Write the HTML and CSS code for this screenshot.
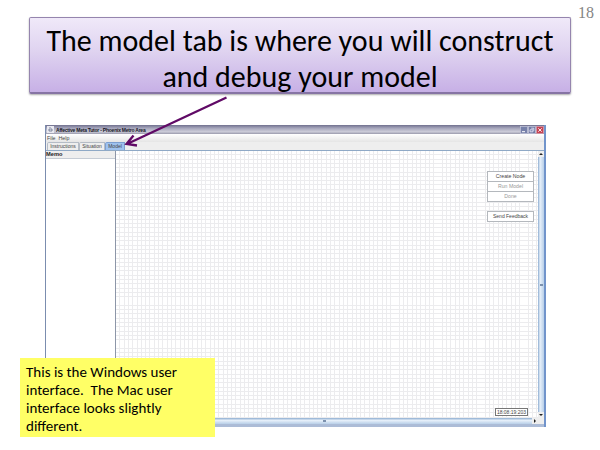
FILE: index.html
```html
<!DOCTYPE html>
<html lang="en">
<head>
<meta charset="utf-8">
<title>Model tab</title>
<link rel="stylesheet" href="styles.css">
</head>
<body>
<main class="slide">
  <div class="page-number">18</div>
  <h1 class="banner">
    <span class="line">The model tab is where you will construct</span>
    <span class="line">and debug your model</span>
  </h1>
  <section class="window">
    <header class="titlebar">
      <svg class="cup" viewBox="0 0 7 7"><path d="M0 0h7v7H0z" fill="#e9e9f0"/><path d="M2 3h3v2H2zM3 1v1" fill="none" stroke="#66708c" stroke-width=".8"/></svg>
      <span class="title">Affective Meta Tutor - Phoenix Metro Area</span>
      <div class="controls">
        <svg viewBox="0 0 8 8"><rect x=".5" y=".5" width="7" height="7" fill="#7781aa" stroke="#c3c7dc" stroke-width=".7"/><path d="M2 5.7h3" stroke="#fff"/></svg>
        <svg viewBox="0 0 8 8"><rect x=".5" y=".5" width="7" height="7" fill="#747da5" stroke="#c3c7dc" stroke-width=".7"/><path d="M2 3.8h3v2H2zM3.2 2.2h2.6v2.5" fill="none" stroke="#eef" stroke-width=".8"/></svg>
        <svg viewBox="0 0 8 8"><rect x=".5" y=".5" width="7" height="7" fill="#c74353" stroke="#d6a0b0" stroke-width=".7"/><path d="M2.3 2.3l3.4 3.4M5.7 2.3L2.3 5.7" stroke="#fff" stroke-width=".9"/></svg>
      </div>
    </header>
    <nav class="menu"><span>File</span><span>Help</span></nav>
    <nav class="tabs"><span class="tab tab-a">Instructions</span><span class="tab tab-b">Situation</span><span class="tab tab-c active">Model</span></nav>
    <div class="work">
      <aside class="memo"><div class="memo-head">Memo</div></aside>
      <div class="canvas">
        <div class="buttons">
          <div class="btn">Create Node</div>
          <div class="btn off">Run Model</div>
          <div class="btn off">Done</div>
          <div class="btn feedback">Send Feedback</div>
        </div>
        <div class="clock">18:08:19:203</div>
      </div>
      <div class="vscroll"><i class="arrow up"></i><div class="thumb"><i></i></div><i class="arrow down"></i></div>
    </div>
    <div class="hscroll"><div class="thumb"><i></i></div><i class="arrow right"></i></div>
  </section>
  <p class="note">
    <span class="line first">This is the Windows user</span>
    <span class="line">interface.&nbsp; The Mac user</span>
    <span class="line">interface looks slightly</span>
    <span class="line">different.</span>
  </p>
  <svg class="pointer" viewBox="0 0 600 450"><path d="M226.500 97.500L127 144M133.500 135.500L126.500 144L137 145.500" fill="none" stroke="#600a66" stroke-width="2.300"/></svg>
</main>
</body>
</html>
```
FILE: styles.css
```css
* { box-sizing: border-box; }
body { margin: 0; background: #fff; }
.slide { position: relative; width: 600px; height: 450px; overflow: hidden; font-family: Carlito, Lato, sans-serif; color: #000; }
.line { display: block; white-space: pre; }
.page-number { position: absolute; left: 578px; top: 4px; font: 16px/18px "Liberation Serif", serif; color: #858585; }
.banner { position: absolute; left: 29px; top: 17px; width: 542px; height: 77px; margin: 0; padding-top: 5px; border: 1px solid #9585ae; border-bottom: 2px solid #8674a4; border-radius: 2px; background: linear-gradient(#f0e9f9, #dfd3f0 45%, #c7b0e6); box-shadow: 0 1px 2px #0005; font-size: 30px; font-weight: 400; line-height: 36px; text-align: center; }
.window { position: absolute; left: 45px; top: 125px; width: 501px; height: 302px; display: flex; flex-direction: column; border-left: 1px solid #7b8daf; border-right: 2px solid #7194cb; font-family: "Liberation Sans", sans-serif; font-size: 5px; color: #444; background: #eee; }
.titlebar { display: flex; align-items: center; height: 9px; flex: none; background: linear-gradient(#70708e, #a5a5bb 35%, #cdcdd9 75%, #9999ac); }
.cup { width: 7px; height: 7px; margin-left: 1px; }
.title { margin-left: 2px; font-weight: 700; letter-spacing: -.23px; color: #16161f; }
.controls { display: flex; margin-left: auto; }
.controls svg { width: 8px; height: 8px; }
.menu { display: flex; gap: 3px; height: 8px; flex: none; padding-left: 1px; font-size: 5.3px; line-height: 8px; background: linear-gradient(#fff, #e5e5e5); }
.tabs { display: flex; align-items: flex-end; height: 9px; flex: none; background: #eee; border-bottom: 1px solid #8fa9c6; }
.tab { height: 8px; line-height: 7px; text-align: center; border: 1px solid #b5bcc6; border-bottom: 0; border-radius: 2px 0 0 0; }
.tab-a { width: 32px; margin-left: 1px; }
.tab-b { width: 26px; }
.tab-c { width: 20px; }
.active { background: #9fc2ee; border-color: #7c9fd0; }
.work { display: flex; flex: 1; min-height: 0; }
.memo { width: 70px; background: #fff; border-right: 1px solid #8d96a8; }
.memo-head { height: 8px; line-height: 7px; font-size: 5.7px; font-weight: 700; color: #222; background: #eee; border-bottom: 1px solid #c5ccd5; }
.canvas { position: relative; flex: 1; background: repeating-linear-gradient(90deg, transparent 0 3.300px, #ececee 3.300px 4.300px), repeating-linear-gradient(transparent 0 3.300px, #ececee 3.300px 4.300px), #fff; }
.buttons { position: absolute; right: 4px; top: 20px; width: 47px; }
.btn { height: 11px; margin-bottom: -1px; line-height: 9px; font-size: 5.2px; border: 1px solid #b4b8bd; background: #fff; text-align: center; white-space: nowrap; }
.off { color: #999; }
.feedback { margin-top: 10px; font-size: 5px; }
.clock { position: absolute; right: 10px; bottom: 2px; width: 33px; height: 8px; line-height: 6px; border: 1px solid #777; background: #fff; text-align: center; white-space: nowrap; }
.vscroll { display: flex; flex-direction: column; width: 6px; background: #eee; }
.vscroll .thumb { display: flex; flex: 1; align-items: center; justify-content: center; background: linear-gradient(90deg, #8cacd0, #e7f0fa 35%, #b8cfe8); }
.thumb i { width: 3px; height: 2px; background: #7c91ae; }
.arrow { display: flex; width: 6px; height: 6px; align-items: center; justify-content: center; }
.arrow::before { content: ""; border: 2px solid transparent; }
.up::before { border-bottom-color: #222; border-top: 0; }
.down::before { border-top-color: #222; border-bottom: 0; }
.right::before { border-left-color: #222; border-right: 0; }
.hscroll { display: flex; height: 9px; flex: none; padding-left: 70px; padding-right: 6px; border-bottom: 3px solid #acbcd7; }
.hscroll .thumb { display: flex; flex: 1; align-items: center; justify-content: center; background: linear-gradient(#8cacd0, #e7f0fa 40%, #b8cfe8); }
.note { position: absolute; left: 20px; top: 358px; width: 195px; height: 79px; margin: 0; padding: 5px 0 0 6px; background: #ffff66; font-size: 15px; line-height: 18px; }
.pointer { position: absolute; left: 0; top: 0; width: 600px; height: 450px; }
```
